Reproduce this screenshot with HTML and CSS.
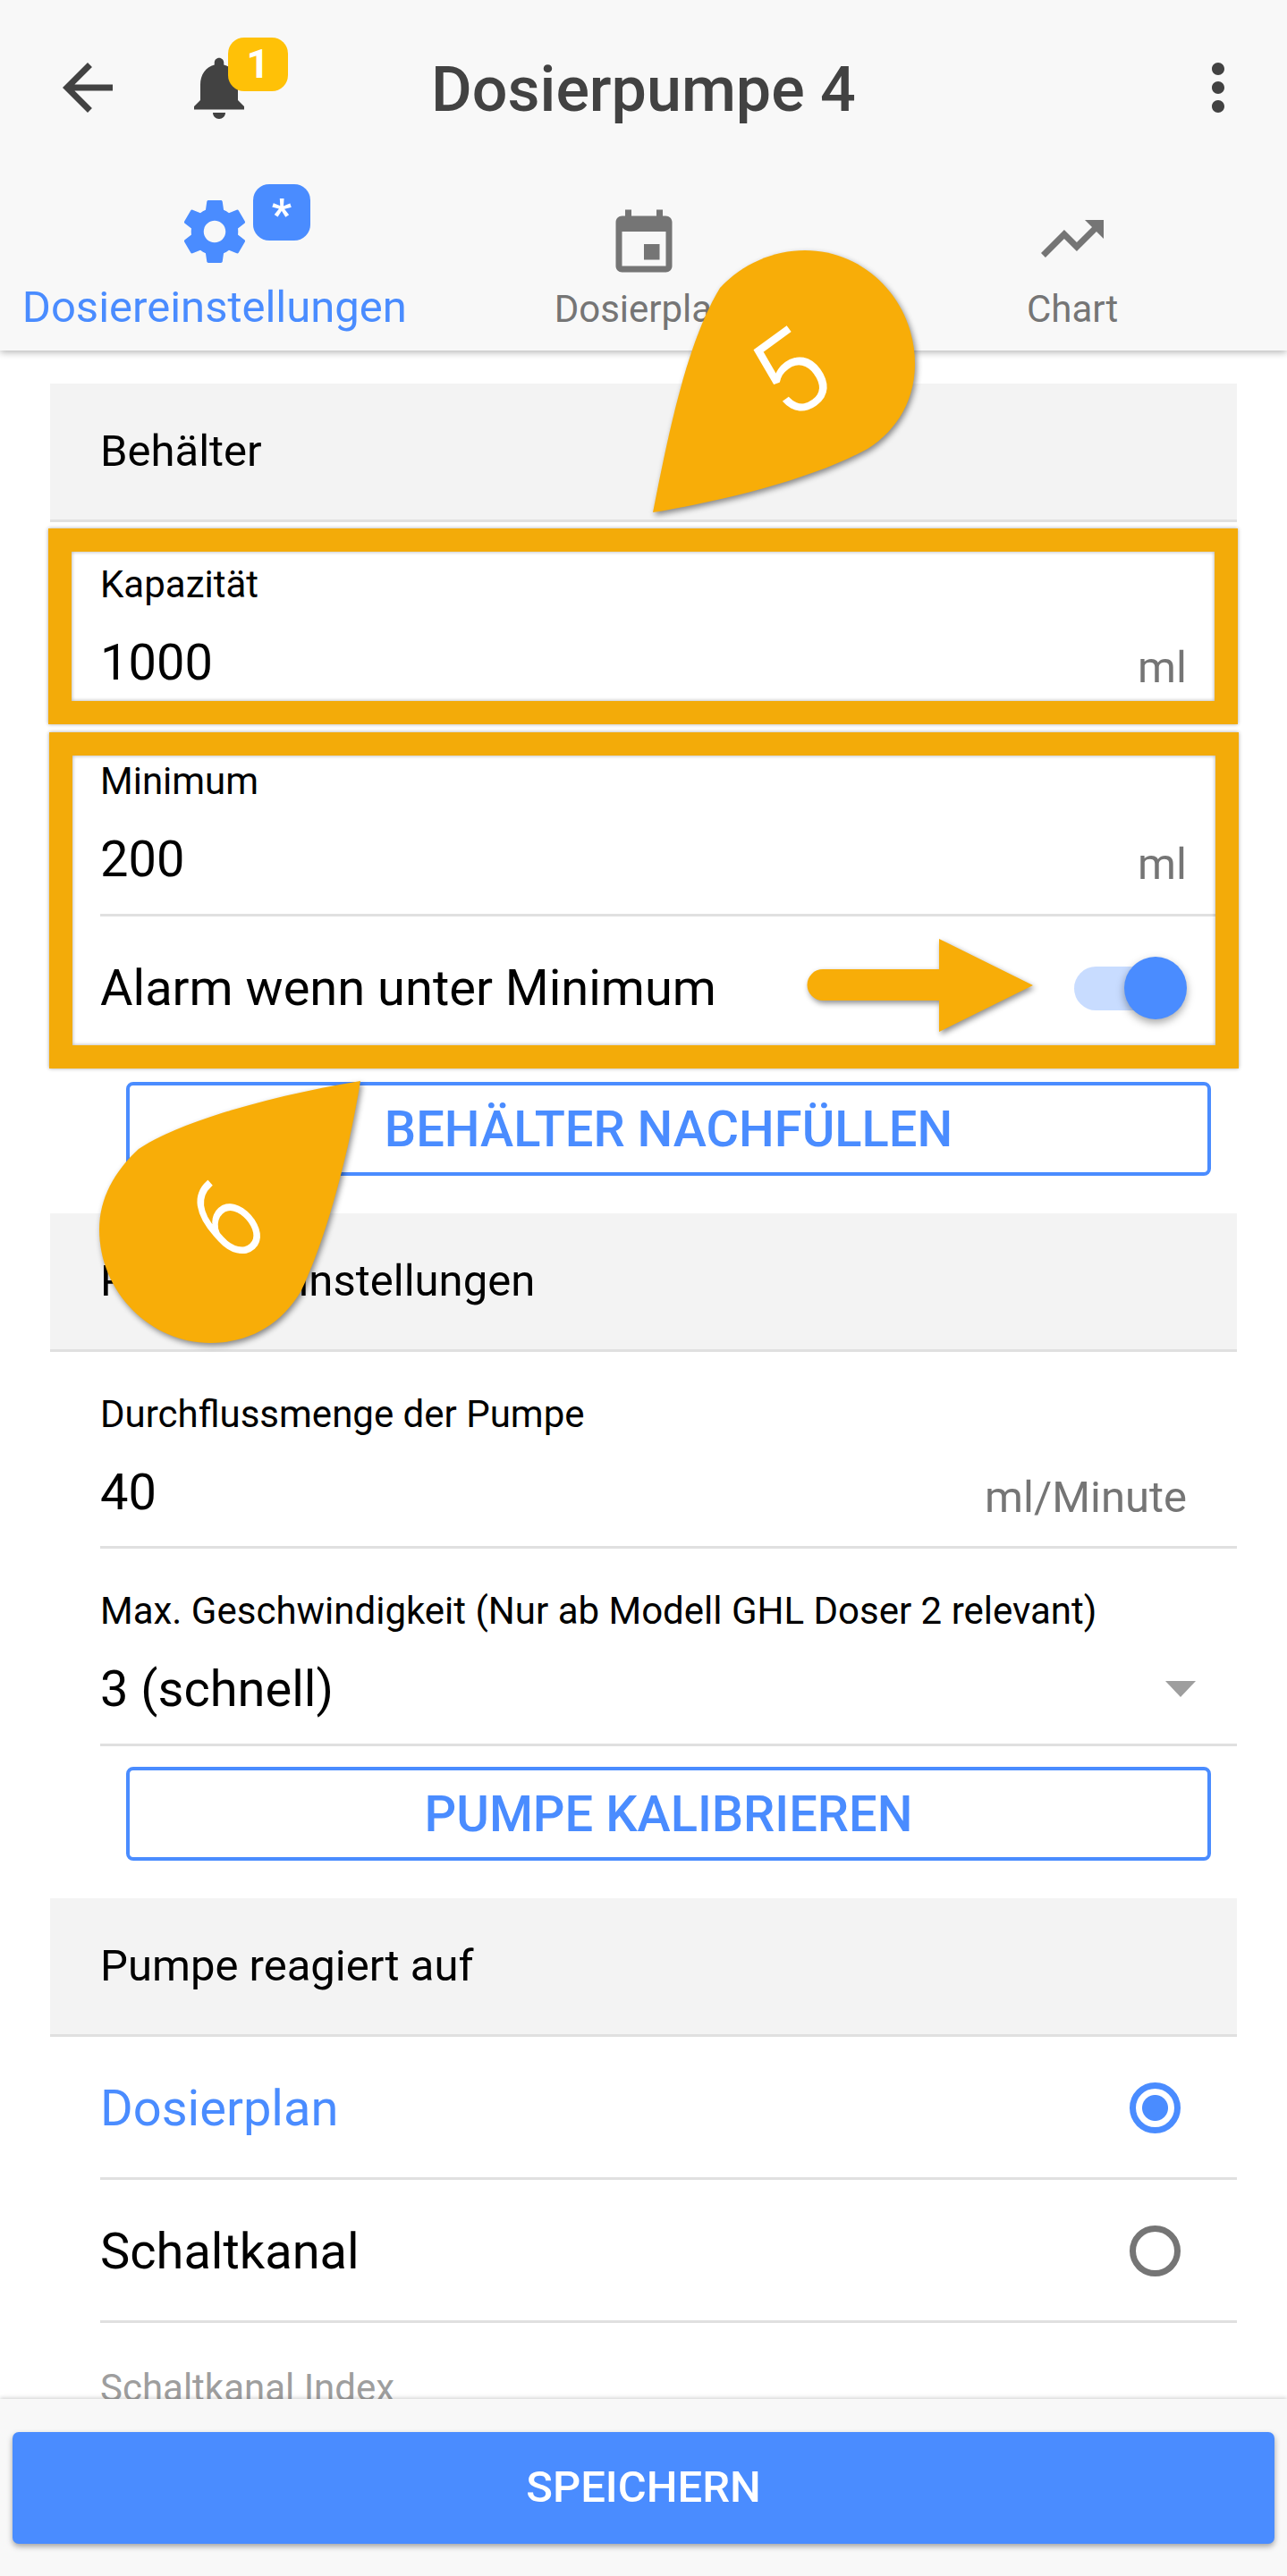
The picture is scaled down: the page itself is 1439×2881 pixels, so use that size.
FILE: index.html
```html
<!DOCTYPE html>
<html lang="de">
<head>
  <meta charset="UTF-8">
  <meta name="viewport" content="width=device-width, initial-scale=1.0">
  <title>Dosierpumpe 4</title>
  <link rel="stylesheet" href="styles.css">
</head>
<body>
  <div class="page">
    <header class="app-header">
      <div class="top-row">
        <div class="top-left">
          <svg class="icon" viewBox="0 0 24 24"><path d="M20 11H7.83l5.59-5.59L12 4l-8 8 8 8 1.41-1.41L7.83 13H20v-2z"/></svg>
          <div class="bell">
            <svg class="icon" viewBox="0 0 24 24"><path d="M12 22c1.1 0 2-.9 2-2h-4c0 1.1.89 2 2 2zm6-6v-5c0-3.07-1.64-5.64-4.5-6.32V4c0-.83-.67-1.5-1.5-1.5s-1.5.67-1.5 1.5v.68C7.63 5.36 6 7.92 6 11v5l-2 2v1h16v-1l-2-2z"/></svg>
            <span class="badge badge-yellow">1</span>
          </div>
        </div>
        <h1 class="title">Dosierpumpe 4</h1>
        <div class="top-right">
          <svg class="icon" viewBox="0 0 24 24"><path d="M12 8c1.1 0 2-.9 2-2s-.9-2-2-2-2 .9-2 2 .9 2 2 2zm0 2c-1.1 0-2 .9-2 2s.9 2 2 2 2-.9 2-2-.9-2-2-2zm0 6c-1.1 0-2 .9-2 2s.9 2 2 2 2-.9 2-2-.9-2-2-2z"/></svg>
        </div>
      </div>
      <nav class="tabs">
        <div class="tab tab-active">
          <div class="tab-icon tab-icon-gear">
            <svg class="icon" viewBox="0 0 24 24"><path d="M19.43 12.98c.04-.32.07-.64.07-.98s-.03-.66-.07-.98l2.11-1.65c.19-.15.24-.42.12-.64l-2-3.46c-.12-.22-.39-.3-.61-.22l-2.49 1c-.52-.4-1.08-.73-1.69-.98l-.38-2.65C14.46 2.18 14.25 2 14 2h-4c-.25 0-.46.18-.49.42l-.38 2.65c-.61.25-1.17.59-1.69.98l-2.49-1c-.23-.09-.49 0-.61.22l-2 3.46c-.13.22-.07.49.12.64l2.11 1.65c-.04.32-.07.65-.07.98s.03.66.07.98l-2.11 1.65c-.19.15-.24.42-.12.64l2 3.46c.12.22.39.3.61.22l2.49-1c.52.4 1.08.73 1.69.98l.38 2.65c.03.24.24.42.49.42h4c.25 0 .46-.18.49-.42l.38-2.65c.61-.25 1.17-.59 1.69-.98l2.49 1c.23.09.49 0 .61-.22l2-3.46c.12-.22.07-.49-.12-.64l-2.11-1.65zM12 15.5c-1.93 0-3.5-1.57-3.5-3.5s1.57-3.5 3.5-3.5 3.5 1.57 3.5 3.5-1.57 3.5-3.5 3.5z"/></svg>
            <span class="badge badge-blue">*</span>
          </div>
          <span class="tab-label">Dosiereinstellungen</span>
        </div>
        <div class="tab">
          <div class="tab-icon tab-icon-event">
            <svg class="icon" viewBox="0 0 24 24"><path d="M17 12h-5v5h5v-5zM16 1v2H8V1H6v2H5c-1.11 0-1.99.9-1.99 2L3 19c0 1.1.89 2 2 2h14c1.1 0 2-.9 2-2V5c0-1.1-.9-2-2-2h-1V1h-2zm3 18H5V8h14v11z"/></svg>
          </div>
          <span class="tab-label">Dosierplan</span>
        </div>
        <div class="tab">
          <div class="tab-icon tab-icon-chart">
            <svg class="icon" viewBox="0 0 24 24"><path d="M16 6l2.29 2.29-4.88 4.88-4-4L2 16.59 3.41 18l6-6 4 4 6.3-6.29L22 12V6z"/></svg>
          </div>
          <span class="tab-label">Chart</span>
        </div>
      </nav>
    </header>

    <main class="content">
      <div class="section-head">Behälter</div>
      <div class="field">
        <label class="field-label">Kapazität</label>
        <div class="field-value"><span>1000</span><span class="unit">ml</span></div>
      </div>
      <div class="field">
        <label class="field-label">Minimum</label>
        <div class="field-value"><span>200</span><span class="unit">ml</span></div>
      </div>
      <div class="switch-row">
        <span>Alarm wenn unter Minimum</span>
        <span class="switch"><span class="switch-thumb"></span></span>
      </div>
      <button class="outline-button">BEHÄLTER NACHFÜLLEN</button>

      <div class="section-head">Pumpen Einstellungen</div>
      <div class="field">
        <label class="field-label">Durchflussmenge der Pumpe</label>
        <div class="field-value"><span>40</span><span class="unit">ml/Minute</span></div>
      </div>
      <div class="field">
        <label class="field-label">Max. Geschwindigkeit (Nur ab Modell GHL Doser 2 relevant)</label>
        <div class="field-value"><span>3 (schnell)</span><span class="dropdown-arrow"></span></div>
      </div>
      <button class="outline-button">PUMPE KALIBRIEREN</button>

      <div class="section-head">Pumpe reagiert auf</div>
      <div class="radio-row radio-selected">
        <span>Dosierplan</span>
        <span class="radio"></span>
      </div>
      <div class="radio-row">
        <span>Schaltkanal</span>
        <span class="radio"></span>
      </div>
      <div class="field field-disabled">
        <label class="field-label">Schaltkanal Index</label>
      </div>
    </main>

    <footer class="app-footer">
      <button class="save-button">SPEICHERN</button>
    </footer>

    <!-- Anmerkungen ueber dem Screenshot -->
    <div class="mark mark-one"></div>
    <div class="mark mark-two"></div>
    <svg class="overlay" viewBox="0 0 1439 2881">
      <g class="callout">
        <path d="M730 573C750 470 770 380 805 322C830 295 865 280 900 280C968 280 1023 337 1023 407C1023 445 1005 480 970 502C910 535 810 560 730 573Z"/>
      </g>
      <text class="callout-num" transform="translate(883 417) rotate(-36)" y="45">5</text>
      <g class="callout">
        <path d="M403 1209C300 1226 200 1255 155 1285C128 1310 111 1340 111 1375C111 1445 168 1502 235 1502C280 1502 315 1480 336 1445C365 1385 390 1290 403 1209Z"/>
      </g>
      <text class="callout-num" transform="translate(252 1363) rotate(-42) scale(0.82 1)" y="45">6</text>
      <g class="callout">
        <path d="M920 1084H1050V1050L1155 1102L1050 1154V1119H920A17.500 17.500 0 0 1 920 1084Z"/>
      </g>
    </svg>
  </div>
</body>
</html>
```
FILE: styles.css
```css
* {
  box-sizing: border-box;
}
body {
  margin: 0;
  background: #fff;
  font-family: Roboto, "Liberation Sans", sans-serif;
  color: #000;
}
.page {
  position: relative;
  width: 1439px;
  height: 2881px;
  overflow: hidden;
  display: flex;
  flex-direction: column;
}
.icon {
  display: block;
  width: 84px;
  height: 84px;
  fill: currentColor;
}

/* header */
.app-header {
  position: relative;
  z-index: 2;
  flex: none;
  height: 392px;
  background: #f8f8f8;
  box-shadow: 0 2px 8px rgba(0,0,0,0.3);
  color: #424242;
}
.top-row {
  display: grid;
  grid-template-columns: 1fr auto 1fr;
  align-items: center;
  height: 196px;
  padding: 0 56px;
}
.top-left {
  display: flex;
  gap: 63px;
}
.top-right {
  display: flex;
  justify-content: flex-end;
  margin-right: -21px;
}
.title {
  margin: 3px 0 0;
  font-size: 70px;
  font-weight: 500;
}
.bell {
  position: relative;
}
.badge {
  position: absolute;
  display: flex;
  justify-content: center;
  color: #fff;
  font-weight: 700;
  border-radius: 18px;
}
.badge-yellow {
  left: 52px;
  top: -14px;
  width: 67px;
  height: 60px;
  background: #ffc107;
  font-size: 45px;
  line-height: 60px;
}
.badge-blue {
  left: 85px;
  top: -11px;
  width: 64px;
  height: 63px;
  background: #4a8cff;
  font-size: 49px;
  line-height: 68px;
}
.tabs {
  display: flex;
  height: 196px;
}
.tab {
  flex: 1;
  display: flex;
  flex-direction: column;
  align-items: center;
  color: #757575;
}
.tab-active {
  color: #4a8cff;
}
.tab-icon {
  position: relative;
  height: 84px;
}
.tab-icon-gear {
  margin: 21px 0 15px;
}
.tab-icon-event {
  margin: 35px 0 3px;
}
.tab-icon-chart {
  margin: 29px 0 9px;
}
.tab-label {
  font-size: 42px;
  line-height: 56px;
}
.tab-active .tab-label {
  font-size: 49px;
  line-height: 56px;
}

/* form */
.content {
  flex: 1;
  min-height: 0;
  overflow: hidden;
  padding: 37px 56px 0;
}
.section-head {
  display: flex;
  align-items: center;
  height: 154.5px;
  padding: 0 56px;
  background: #f3f3f3;
  border-bottom: 3.5px solid #e0e0e0;
  font-size: 49px;
}
.field {
  height: 220.5px;
  margin-left: 56px;
  padding-top: 46px;
  border-bottom: 3.5px solid #e0e0e0;
}
.field-label {
  display: block;
  font-size: 42px;
  line-height: 48px;
}
.field-value {
  display: flex;
  justify-content: space-between;
  align-items: center;
  margin-top: 30px;
  padding-right: 56px;
  font-size: 56px;
  line-height: 66px;
}
.unit {
  position: relative;
  top: 6px;
  font-size: 49px;
  color: #757575;
}
.dropdown-arrow {
  width: 0;
  height: 0;
  margin-right: -10px;
  border-left: 17.5px solid transparent;
  border-right: 17.5px solid transparent;
  border-top: 18px solid #9e9e9e;
}
.field-disabled {
  padding-top: 49px;
  border-bottom: none;
  color: #9e9e9e;
}
.switch-row {
  display: flex;
  justify-content: space-between;
  align-items: center;
  height: 160px;
  margin-left: 56px;
  padding-right: 63px;
  font-size: 56px;
}
.switch {
  position: relative;
  width: 119px;
  height: 49px;
  margin-top: 1px;
  border-radius: 25px;
  background: #c8dcff;
}
.switch-thumb {
  position: absolute;
  right: -7px;
  top: -11px;
  width: 70px;
  height: 70px;
  border-radius: 50%;
  background: #4a8cff;
  box-shadow: 0 4px 10px rgba(0,0,0,0.35);
}
.outline-button {
  display: block;
  width: 1213px;
  height: 105px;
  margin: 25.5px 0 42px 85px;
  padding: 0;
  background: #fff;
  border: 4px solid #4a8cff;
  border-radius: 8px;
  color: #4a8cff;
  font-family: inherit;
  font-size: 56px;
  font-weight: 500;
}
.field + .outline-button {
  margin-top: 23.5px;
}
.radio-row {
  display: flex;
  justify-content: space-between;
  align-items: center;
  height: 160px;
  margin-left: 56px;
  padding: 3px 63px 0 0;
  border-bottom: 3.5px solid #e0e0e0;
  font-size: 56px;
}
.radio {
  width: 57px;
  height: 57px;
  border: 7px solid #757575;
  border-radius: 50%;
}
.radio-selected {
  color: #4a8cff;
}
.radio-selected .radio {
  border-color: #4a8cff;
  background: radial-gradient(circle, #4a8cff 14px, #fff 15px);
}

/* footer */
.app-footer {
  position: relative;
  z-index: 2;
  flex: none;
  height: 198px;
  padding: 37px 14px 0;
  background: #f8f8f8;
  box-shadow: 0 -1px 5px rgba(0,0,0,0.2);
}
.save-button {
  display: block;
  width: 100%;
  height: 125px;
  padding-bottom: 3px;
  border: none;
  border-radius: 7px;
  background: #4a8cff;
  box-shadow: 0 3px 6px rgba(0,0,0,0.35);
  color: #fff;
  font-family: inherit;
  font-size: 49px;
  font-weight: 500;
}

/* annotations */
.mark {
  position: absolute;
  z-index: 3;
  border: 26px solid #f3ab09;
  box-shadow: 0 0 4px rgba(0,0,0,0.35), inset 0 0 4px rgba(0,0,0,0.35);
}
.mark-one {
  left: 54px;
  top: 591px;
  width: 1330px;
  height: 219px;
}
.mark-two {
  left: 55px;
  top: 819px;
  width: 1330px;
  height: 376px;
}
.overlay {
  position: absolute;
  z-index: 4;
  left: 0;
  top: 0;
  width: 1439px;
  height: 2881px;
}
.callout {
  fill: #f8ad08;
  filter: drop-shadow(2px 3px 3px rgba(0,0,0,0.45));
}
.callout-num {
  fill: #fff;
  stroke: #fff;
  stroke-width: 1.5px;
  font-family: Roboto, sans-serif;
  font-size: 125px;
  font-weight: 300;
  text-anchor: middle;
}
```
